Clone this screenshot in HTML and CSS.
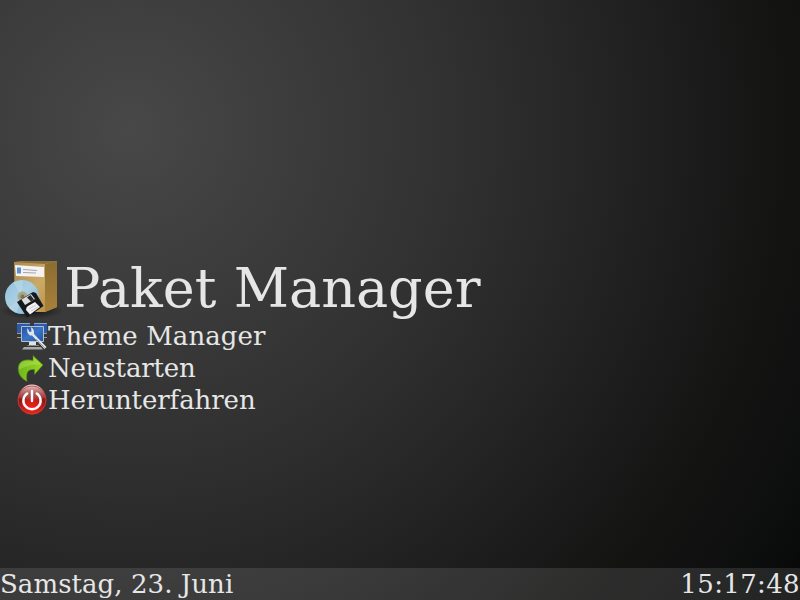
FILE: index.html
```html
<!DOCTYPE html>
<html lang="de">
<head>
<meta charset="utf-8">
<title>Paket Manager</title>
<link rel="stylesheet" href="styles.css">
</head>
<body>
<main class="menu">
  <div class="entry entry-active">
    <svg class="icon-large" viewBox="0 0 64 64">
      <defs>
        <linearGradient id="box" x2="1" y2="1"><stop stop-color="#a88a50"/><stop offset=".5" stop-color="#cbaa68"/><stop offset="1" stop-color="#b48a40"/></linearGradient>
        <linearGradient id="side" x2="0" y2="1"><stop stop-color="#8a6d33"/><stop offset="1" stop-color="#a98038"/></linearGradient>
        <linearGradient id="disc" x2="1" y2="1"><stop stop-color="#8fc0e0"/><stop offset=".45" stop-color="#aacfe2"/><stop offset="1" stop-color="#7bb2d8"/></linearGradient>
        <radialGradient id="shade"><stop stop-color="#000" stop-opacity=".65"/><stop offset="1" stop-color="#000" stop-opacity="0"/></radialGradient>
      </defs>
      <ellipse cx="32" cy="55" rx="32" ry="8" fill="url(#shade)"/>
      <path d="M14 6 24 5H57V51L45 56H15z" fill="url(#box)"/>
      <path d="M45 8 57 5V51L45 56z" fill="url(#side)"/>
      <path d="M14 6 26 5H57L45 8z" fill="#8c6e38"/>
      <path d="M15 9 44 11V21L16 20z" fill="#f5f3f1"/>
      <path d="M17 11.500h4v6h-4z" fill="#5b91d2"/>
      <path d="M23 13.500 37 14.500M23 16.500 36 17" stroke="#a5a5b0"/>
      <circle cx="22" cy="41" r="17" fill="url(#disc)"/>
      <path d="M22 41 13 26 23 24zM22 41 9 52 16 57z" fill="#d4eaf0" opacity=".3"/>
      <circle cx="22.500" cy="40.500" r="5" fill="#a9a783"/>
      <circle cx="22.500" cy="40.500" r="2" fill="#77745d"/>
      <path d="M17 46 33 36 36 37 43.500 50 27 61.500z" fill="#17181b"/>
      <path d="M21.500 43.500 31 38 35 43 25 49z" fill="#dcdcdc"/>
      <path d="M27 41.500 30.500 39 34 43.500 31 45.500z" fill="#292a2d"/>
      <path d="M26 54Q26 51 28 50L35 46 40 51 30 58.500z" fill="#f1f1f3"/>
      <path d="M29 53 36 49M31 55 38 51" stroke="#b4b4bd" stroke-width=".7"/>
    </svg>
    <span class="label-large">Paket Manager</span>
  </div>
  <div class="entry">
    <svg class="icon" viewBox="0 0 32 32">
      <defs><linearGradient id="screen" x2="1" y2="1"><stop stop-color="#2450a0"/><stop offset=".5" stop-color="#3975c6"/><stop offset="1" stop-color="#1d55ad"/></linearGradient></defs>
      <path d="M1 3.500H14V13H1zM18 3.500H31V13H18z" fill="#2b5ba8"/>
      <path d="M1 3.500H14M18 3.500H31" stroke="#86a5cf"/>
      <path d="M1 17.500H5M28 17.500H31M1 13.500H5M28 13.500H31" stroke="#999"/>
      <path d="M5.500 6.500H27.500V21.500H5.500z" fill="url(#screen)" stroke="#b6bec8"/>
      <path d="M13 22H20V26H13z" fill="#e2e2e0"/>
      <path d="M8 27H25L27 29.500H6z" fill="#a6aaa5"/>
      <path d="M11.500 25.500H23" stroke="#858a85"/>
      <path d="M11.500 8Q10 13 14 15.500L16 15.500 28.500 29 30.500 27 18 14Q18.500 9 15 7L15.500 11.500 13.500 12z" fill="#dfe4e8"/>
      <path d="m20 19 9 9" stroke="#a7a8a7"/>
    </svg>
    <span class="label label-theme">Theme Manager</span>
  </div>
  <div class="entry">
    <svg class="icon" viewBox="0 0 32 32">
      <defs><linearGradient id="arrow" x2="1" y2=".3"><stop stop-color="#66ae18"/><stop offset="1" stop-color="#98d622"/></linearGradient></defs>
      <path d="M17 3.500 27 13 18.500 22.500V17.500C11 17 10 21 11 29.500C4 25.500 2 21 2.200 16C2.500 9 9 6.500 17 8.500z" fill="url(#arrow)" stroke="#428913" stroke-width=".5"/>
      <path d="M3 15C4 9 9 8 17.500 9.500V5L25 12.500Q12 12 3 18z" fill="#c9ed72" opacity=".35"/>
    </svg>
    <span class="label label-restart">Neustarten</span>
  </div>
  <div class="entry">
    <svg class="icon" viewBox="0 0 32 32">
      <defs>
        <radialGradient id="power" cy=".8"><stop stop-color="#f0271b"/><stop offset=".65" stop-color="#c91c17"/><stop offset="1" stop-color="#8b171a"/></radialGradient>
        <linearGradient id="gloss" x2="0" y2="1"><stop stop-color="#f1d6d5"/><stop offset="1" stop-color="#a85452" stop-opacity=".4"/></linearGradient>
      </defs>
      <circle cx="16" cy="16" r="14.500" fill="url(#power)"/>
      <path d="M2.500 14A13.500 13.500 0 0 1 29.500 14Q17 17 2.500 14z" fill="url(#gloss)"/>
      <circle cx="16" cy="16" r="14" fill="none" stroke="#c94642" stroke-width=".8"/>
      <path d="M11.200 9.500A8.600 8.600 0 1 0 20.800 9.500M16 7V17" fill="none" stroke="#fff" stroke-width="2.400" stroke-linecap="round"/>
    </svg>
    <span class="label label-shutdown">Herunterfahren</span>
  </div>
</main>
<footer class="bar"><span class="date">Samstag, 23. Juni</span><span class="clock">15:17:48</span></footer>
</body>
</html>
```
FILE: styles.css
```css
body {
  margin: 0;
  height: 600px;
  overflow: hidden;
  display: flex;
  flex-direction: column;
  color: #e6e6e6;
  font: 26px/32px "DejaVu Serif", serif;
  background: radial-gradient(circle at 130px 130px, #484848 0, #3d3d3d 150px, #313131 320px, #262626 450px, #1c1c1c 560px, #131312 660px, #0d0f0e 750px, #050505 830px);
}

.menu {
  flex: 1;
  padding-top: 256px;
}

.entry {
  display: flex;
  height: 32px;
  padding-left: 16px;
  white-space: nowrap;
}

.entry-active {
  height: 64px;
  padding-left: 0;
}

.icon {
  width: 32px;
  height: 32px;
}

.icon-large {
  width: 64px;
  height: 64px;
}

.label-large {
  font-size: 54px;
  line-height: 66px;
}

.label-theme {
  letter-spacing: 0.06px;
}

.label-restart {
  letter-spacing: -0.15px;
}

.label-shutdown {
  letter-spacing: -0.08px;
}

.bar {
  display: flex;
  justify-content: space-between;
  height: 32px;
  background: rgba(255, 255, 255, 0.11);
}

.date {
  letter-spacing: 0.06px;
}

.clock {
  letter-spacing: 0.36px;
}
```
